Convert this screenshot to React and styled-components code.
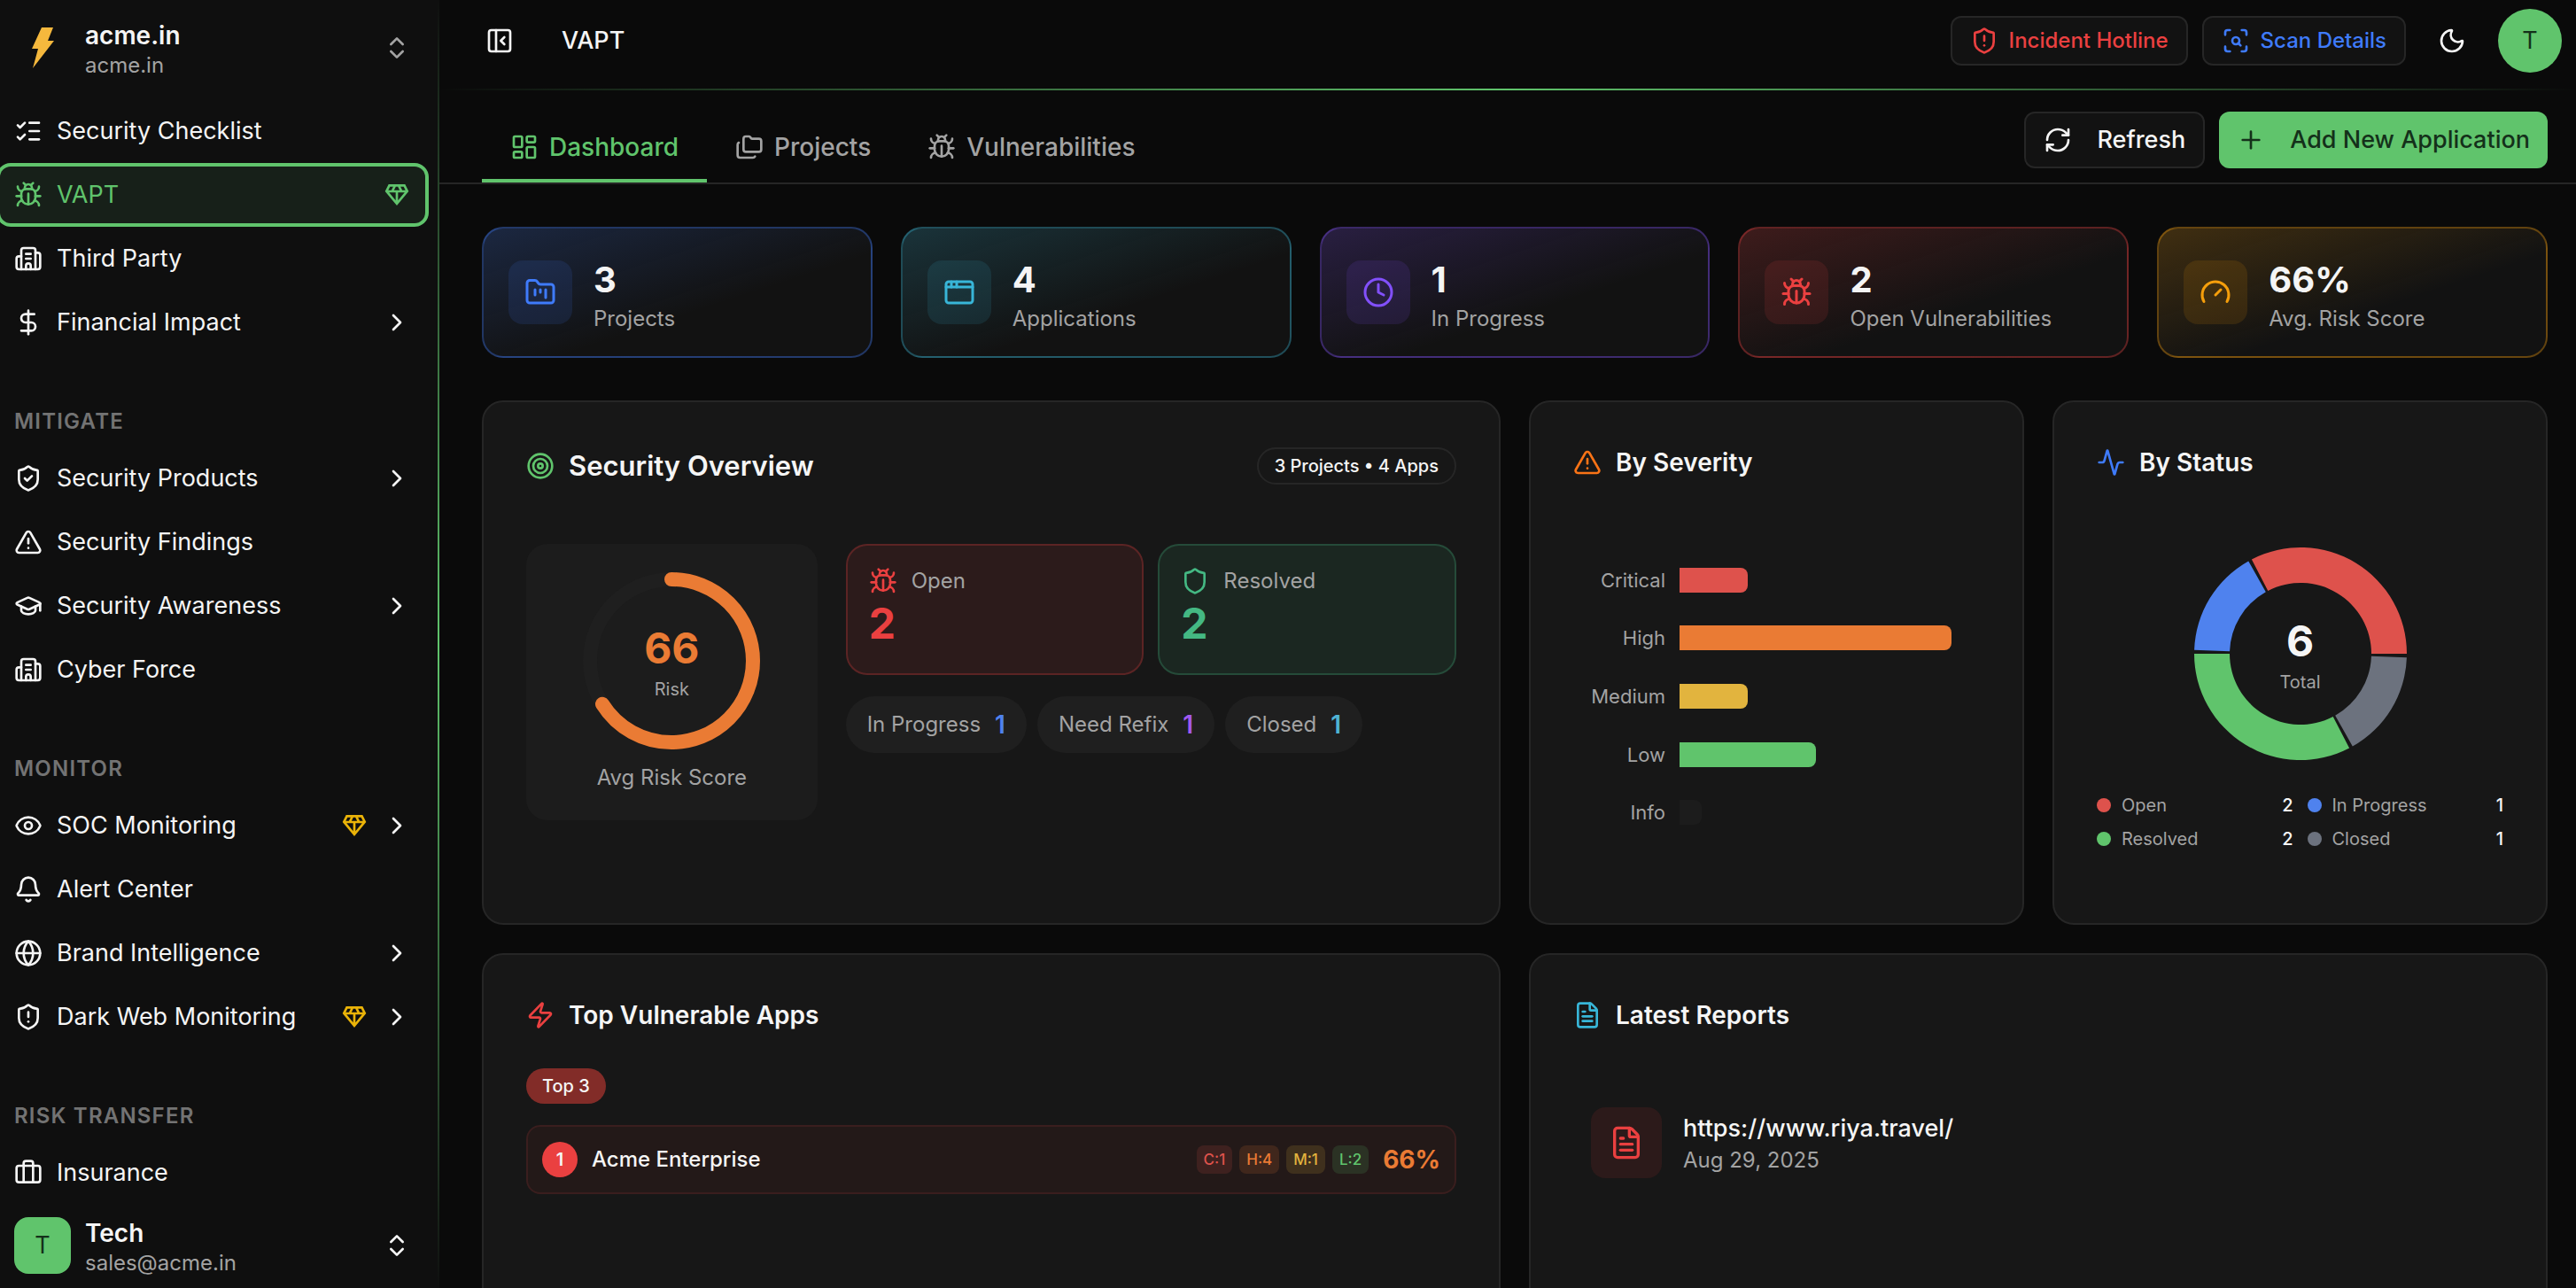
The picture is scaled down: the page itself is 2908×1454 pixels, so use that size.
import React from "react";
//Styled Components
import styled, { createGlobalStyle } from "styled-components";
//Icons
import {
  Activity,
  AppWindow,
  Bell,
  Briefcase,
  Bug,
  Building2,
  ChevronRight,
  ChevronsUpDown,
  Clock,
  DollarSign,
  Eye,
  FileText,
  FolderKanban,
  Folders,
  Gauge,
  Globe,
  GraduationCap,
  LayoutDashboard,
  ListChecks,
  Moon,
  PanelLeftClose,
  Plus,
  RefreshCw,
  ScanSearch,
  Shield,
  ShieldAlert,
  ShieldCheck,
  Target,
  TriangleAlert,
  Zap,
} from "lucide-react";
import { MdOutlineDiamond } from "react-icons/md";

const navGroups = [
  {
    items: [
      { name: "Security Checklist", icon: ListChecks },
      { name: "VAPT", icon: Bug, active: true, premium: true },
      { name: "Third Party", icon: Building2 },
      { name: "Financial Impact", icon: DollarSign, more: true },
    ],
  },
  {
    title: "MITIGATE",
    items: [
      { name: "Security Products", icon: ShieldCheck, more: true },
      { name: "Security Findings", icon: TriangleAlert },
      { name: "Security Awareness", icon: GraduationCap, more: true },
      { name: "Cyber Force", icon: Building2 },
    ],
  },
  {
    title: "MONITOR",
    items: [
      { name: "SOC Monitoring", icon: Eye, premium: true, more: true },
      { name: "Alert Center", icon: Bell },
      { name: "Brand Intelligence", icon: Globe, more: true },
      { name: "Dark Web Monitoring", icon: ShieldAlert, premium: true, more: true },
    ],
  },
  {
    title: "RISK TRANSFER",
    items: [{ name: "Insurance", icon: Briefcase }],
  },
];

const stats = [
  { value: "3", label: "Projects", icon: FolderKanban, color: "#3f7bfb", rgb: "63, 123, 251" },
  { value: "4", label: "Applications", icon: AppWindow, color: "#38b6d8", rgb: "56, 182, 216" },
  { value: "1", label: "In Progress", icon: Clock, color: "#8250fb", rgb: "130, 80, 251" },
  { value: "2", label: "Open Vulnerabilities", icon: Bug, color: "#ea4040", rgb: "234, 64, 64" },
  { value: "66%", label: "Avg. Risk Score", icon: Gauge, color: "#f59e0b", rgb: "245, 158, 11" },
];

const severities = [
  { name: "Critical", count: 1, color: "#de524c" },
  { name: "High", count: 4, color: "#ea7b34" },
  { name: "Medium", count: 1, color: "#e2b43e" },
  { name: "Low", count: 2, color: "#60c46c" },
  { name: "Info", count: 0, color: "#1c1c1c" },
];

const statuses = [
  { name: "Open", count: 2, color: "#de524c" },
  { name: "In Progress", count: 1, color: "#4f82ee" },
  { name: "Resolved", count: 2, color: "#60c46c" },
  { name: "Closed", count: 1, color: "#6c727e" },
];

const pills = [
  { name: "In Progress", count: 1, color: "#4f82ee" },
  { name: "Need Refix", count: 1, color: "#a259f0" },
  { name: "Closed", count: 1, color: "#4fb3d4" },
];

const counts = [
  { text: "C:1", color: "#de524c", rgb: "222, 82, 76" },
  { text: "H:4", color: "#ea7b34", rgb: "234, 123, 52" },
  { text: "M:1", color: "#e2b43e", rgb: "226, 180, 62" },
  { text: "L:2", color: "#60c46c", rgb: "96, 196, 108" },
];

const point = (radius, angle) => {
  const rad = (angle * Math.PI) / 180;
  return `${120 + radius * Math.cos(rad)} ${120 - radius * Math.sin(rad)}`;
};

//Slices run counter clockwise from 3 o'clock with a 2 degree gap
const getSlices = () => {
  const total = statuses.reduce((sum, s) => sum + s.count, 0);
  const unit = (360 - statuses.length * 2) / total;
  let start = 0;
  //Closed sits between Resolved and the starting point
  return statuses.map((s) => {
    const end = start + s.count * unit;
    const d = `M${point(120, start)} A120 120 0 0 0 ${point(120, end)} L${point(80, end)} A80 80 0 0 1 ${point(80, start)} Z`;
    start = end + 2;
    return { name: s.name, color: s.color, d };
  });
};

function Sidebar() {
  return (
    <Side>
      <Org type="button">
        <OrgLogo>
          <svg width="28" height="48" viewBox="0 0 28 48" aria-hidden="true">
            <path d="M13 1h13l-6 15h7L3 47l6-22H2z" fill="#f5b83d" />
          </svg>
        </OrgLogo>
        <Account>
          <strong>acme.in</strong>
          <span>acme.in</span>
        </Account>
        <ChevronsUpDown size={32} color="#a3a3a3" />
      </Org>
      <Nav>
        {navGroups.map((group) => (
          <NavGroup key={group.title || "main"}>
            {group.title && <NavTitle>{group.title}</NavTitle>}
            {group.items.map((item) => (
              <NavItem href="#" key={item.name} $active={item.active}>
                <item.icon size={32} />
                <span>{item.name}</span>
                {item.premium && (
                  <MdOutlineDiamond size={32} color={item.active ? "#60c46c" : "#eab308"} />
                )}
                {item.more && <ChevronRight size={32} />}
              </NavItem>
            ))}
          </NavGroup>
        ))}
      </Nav>
      <User type="button">
        <UserTile>T</UserTile>
        <Account>
          <strong>Tech</strong>
          <span>sales@acme.in</span>
        </Account>
        <ChevronsUpDown size={32} />
      </User>
    </Side>
  );
}

function TopBar() {
  return (
    <Header>
      <IconButton type="button" aria-label="Collapse sidebar">
        <PanelLeftClose size={32} />
      </IconButton>
      <PageName>VAPT</PageName>
      <HeaderButton type="button" $color="#ea4040">
        <ShieldAlert size={32} />
        Incident Hotline
      </HeaderButton>
      <HeaderButton type="button" $color="#3f7bfb">
        <ScanSearch size={32} />
        Scan Details
      </HeaderButton>
      <IconButton type="button" aria-label="Toggle theme">
        <Moon size={32} />
      </IconButton>
      <Avatar type="button">T</Avatar>
    </Header>
  );
}

function StatCard({ stat }) {
  return (
    <Stat $rgb={stat.rgb}>
      <StatIcon $color={stat.color} $rgb={stat.rgb}>
        <stat.icon size={36} />
      </StatIcon>
      <StatText>
        <StatValue>{stat.value}</StatValue>
        <StatLabel>{stat.label}</StatLabel>
      </StatText>
    </Stat>
  );
}

function Overview() {
  const length = 2 * Math.PI * 92;
  return (
    <Card $span={2}>
      <CardHead $large>
        <Target size={32} color="#60c46c" />
        <h2>Security Overview</h2>
        <Outline>3 Projects • 4 Apps</Outline>
      </CardHead>
      <OverviewGrid>
        <RiskBox>
          <Chart $size={200}>
            <svg width="200" height="200" viewBox="0 0 200 200" fill="none" aria-hidden="true">
              <circle cx="100" cy="100" r="92" stroke="#1f1f1f" strokeWidth="16" />
              <circle
                cx="100"
                cy="100"
                r="92"
                stroke="#ea7b34"
                strokeWidth="16"
                strokeLinecap="round"
                strokeDasharray={`${length * 0.66} ${length}`}
                transform="rotate(-90 100 100)"
              />
            </svg>
            <ChartCenter $color="#ea7b34">
              <strong>66</strong>
              <span>Risk</span>
            </ChartCenter>
          </Chart>
          <p>Avg Risk Score</p>
        </RiskBox>
        <OverviewSide>
          <Tiles>
            <Tile $color="#ea4040" $rgb="234, 64, 64">
              <div>
                <Bug size={32} />
                <span>Open</span>
              </div>
              <strong>2</strong>
            </Tile>
            <Tile $color="#44b883" $rgb="68, 184, 131">
              <div>
                <Shield size={32} />
                <span>Resolved</span>
              </div>
              <strong>2</strong>
            </Tile>
          </Tiles>
          <Pills>
            {pills.map((pill) => (
              <Pill key={pill.name} $color={pill.color}>
                {pill.name}
                <strong>{pill.count}</strong>
              </Pill>
            ))}
          </Pills>
        </OverviewSide>
      </OverviewGrid>
    </Card>
  );
}

function Severity() {
  return (
    <Card>
      <CardHead>
        <TriangleAlert size={32} color="#f97316" />
        <h2>By Severity</h2>
      </CardHead>
      <Bars>
        {severities.map((s) => (
          <BarRow key={s.name}>
            <span>{s.name}</span>
            <div>
              <Bar $color={s.color} style={{ width: `${Math.max(s.count * 25, 8)}%` }} />
            </div>
          </BarRow>
        ))}
      </Bars>
    </Card>
  );
}

function Status() {
  return (
    <Card>
      <CardHead>
        <Activity size={32} color="#3f7bfb" />
        <h2>By Status</h2>
      </CardHead>
      <Donut>
        <Chart $size={240}>
          <svg width="240" height="240" viewBox="0 0 240 240" aria-hidden="true">
            {getSlices().map((slice) => (
              <path key={slice.name} d={slice.d} fill={slice.color} />
            ))}
          </svg>
          <ChartCenter $color="#f5f5f5">
            <strong>6</strong>
            <span>Total</span>
          </ChartCenter>
        </Chart>
      </Donut>
      <Legend>
        {statuses.map((s) => (
          <LegendItem key={s.name} $color={s.color}>
            <span>{s.name}</span>
            <strong>{s.count}</strong>
          </LegendItem>
        ))}
      </Legend>
    </Card>
  );
}

function TopApps() {
  return (
    <Card $span={2} $tall>
      <CardHead>
        <Zap size={32} color="#ea4040" />
        <h2>Top Vulnerable Apps</h2>
      </CardHead>
      <TopBadge>Top 3</TopBadge>
      <AppRow>
        <Rank>1</Rank>
        <p>Acme Enterprise</p>
        {counts.map((count) => (
          <Count key={count.text} $color={count.color} $rgb={count.rgb}>
            {count.text}
          </Count>
        ))}
        <Score>66%</Score>
      </AppRow>
    </Card>
  );
}

function Reports() {
  return (
    <Card $span={2} $tall>
      <CardHead>
        <FileText size={32} color="#38b6d8" />
        <h2>Latest Reports</h2>
      </CardHead>
      <Report>
        <ReportIcon>
          <FileText size={40} />
        </ReportIcon>
        <div>
          <a href="#">https://www.riya.travel/</a>
          <p>Aug 29, 2025</p>
        </div>
      </Report>
    </Card>
  );
}

function App() {
  return (
    <>
      <GlobalStyle />
      <Page>
        <Sidebar />
        <Main>
          <TopBar />
          <Toolbar>
            <Tabs>
              <Tab href="#" $active>
                <LayoutDashboard size={32} />
                Dashboard
              </Tab>
              <Tab href="#">
                <Folders size={32} />
                Projects
              </Tab>
              <Tab href="#">
                <Bug size={32} />
                Vulnerabilities
              </Tab>
            </Tabs>
            <Actions>
              <Action type="button">
                <RefreshCw size={32} />
                Refresh
              </Action>
              <Action type="button" $primary>
                <Plus size={32} />
                Add New Application
              </Action>
            </Actions>
          </Toolbar>
          <Content>
            <Stats>
              {stats.map((stat) => (
                <StatCard stat={stat} key={stat.label} />
              ))}
            </Stats>
            <Cards>
              <Overview />
              <Severity />
              <Status />
              <TopApps />
              <Reports />
            </Cards>
          </Content>
        </Main>
      </Page>
    </>
  );
}

const GlobalStyle = createGlobalStyle`
  * {
    margin: 0;
    padding: 0;
    box-sizing: border-box;
  }
  body {
    background: #0a0a0a;
    color: #f5f5f5;
    font-family: "Inter", "Liberation Sans", sans-serif;
    font-size: 27px;
    line-height: 40px;
    -webkit-font-smoothing: antialiased;
  }
  button {
    font: inherit;
    color: inherit;
    background: none;
    border: none;
    cursor: pointer;
  }
  a {
    color: inherit;
    text-decoration: none;
  }
  svg {
    flex-shrink: 0;
    display: block;
  }
`;
const Page = styled.div`
  display: flex;
  height: 100vh;
  overflow: hidden;
`;
const Side = styled.aside`
  width: 496px;
  flex-shrink: 0;
  display: flex;
  flex-direction: column;
  background: #0f0f0f;
  border-right: 2px solid;
  border-image: linear-gradient(to bottom, transparent, #60c46c, transparent) 1;
`;
const Org = styled.button`
  display: flex;
  align-items: center;
  gap: 16px;
  height: 108px;
  padding: 0 30px 0 16px;
  flex-shrink: 0;
`;
const OrgLogo = styled.span`
  width: 64px;
  display: flex;
  justify-content: center;
`;
const Account = styled.span`
  flex: 1;
  display: flex;
  flex-direction: column;
  padding-top: 4px;
  text-align: left;
  strong {
    font-size: 28px;
    font-weight: 600;
    line-height: 36px;
  }
  span {
    font-size: 24px;
    line-height: 32px;
    color: #a3a3a3;
  }
`;
const Nav = styled.nav`
  flex: 1;
  min-height: 0;
  overflow: hidden;
  display: flex;
  flex-direction: column;
  gap: 48px;
  padding: 8px 14px 0 0;
`;
const NavGroup = styled.div`
  display: flex;
  flex-direction: column;
  gap: 8px;
`;
const NavTitle = styled.h3`
  padding: 0 16px;
  margin-bottom: -8px;
  font-size: 24px;
  font-weight: 600;
  line-height: 64px;
  letter-spacing: 0.05em;
  color: #737373;
`;
const NavItem = styled.a`
  display: flex;
  align-items: center;
  gap: 16px;
  height: 64px;
  padding: 0 16px;
  border-radius: 12px;
  color: ${({ $active }) => ($active ? "#60c46c" : "#f5f5f5")};
  background: ${({ $active }) => ($active ? "#172019" : "none")};
  box-shadow: ${({ $active }) => ($active ? "0 0 0 4px #60c46c" : "none")};
  span {
    flex: 1;
  }
`;
const User = styled.button`
  display: flex;
  align-items: center;
  gap: 16px;
  height: 96px;
  padding: 0 30px 0 16px;
  flex-shrink: 0;
`;
const UserTile = styled.span`
  width: 64px;
  height: 64px;
  border-radius: 16px;
  background: #60c46c;
  color: #14301a;
  line-height: 64px;
`;
const Main = styled.main`
  flex: 1;
  min-width: 0;
  display: flex;
  flex-direction: column;
`;
const Header = styled.header`
  display: flex;
  align-items: center;
  gap: 16px;
  padding: 10px 16px 18px 32px;
  flex-shrink: 0;
  border-bottom: 2px solid;
  border-image: linear-gradient(to right, transparent, #60c46c, transparent) 1;
`;
const IconButton = styled.button`
  width: 72px;
  height: 72px;
  display: flex;
  align-items: center;
  justify-content: center;
`;
const PageName = styled.h1`
  flex: 1;
  padding-left: 18px;
  font-size: 27px;
  font-weight: 500;
`;
const HeaderButton = styled.button`
  display: flex;
  align-items: center;
  gap: 12px;
  height: 56px;
  padding: 0 20px;
  border: 2px solid #262626;
  border-radius: 12px;
  background: #121212;
  color: ${({ $color }) => $color};
  font-size: 24px;
  font-weight: 500;
`;
const Avatar = styled.button`
  width: 72px;
  height: 72px;
  border-radius: 50%;
  background: #60c46c;
  color: #14301a;
`;
const Toolbar = styled.div`
  display: flex;
  justify-content: space-between;
  padding: 24px 32px 0 48px;
  flex-shrink: 0;
  border-bottom: 2px solid #262626;
`;
const Tabs = styled.nav`
  display: flex;
  padding-top: 4px;
`;
const Tab = styled.a`
  display: flex;
  align-items: center;
  gap: 12px;
  height: 76px;
  padding: 0 32px;
  font-size: 28px;
  font-weight: 500;
  color: ${({ $active }) => ($active ? "#60c46c" : "#a3a3a3")};
  border-bottom: 4px solid ${({ $active }) => ($active ? "#60c46c" : "transparent")};
`;
const Actions = styled.div`
  display: flex;
  gap: 16px;
`;
const Action = styled.button`
  display: flex;
  align-items: center;
  gap: 28px;
  height: 64px;
  padding: 0 20px;
  border: ${({ $primary }) => ($primary ? "none" : "2px solid #262626")};
  border-radius: 12px;
  background: ${({ $primary }) => ($primary ? "#60c46c" : "#121212")};
  color: ${({ $primary }) => ($primary ? "#14301a" : "#f5f5f5")};
  font-weight: 500;
`;
const Content = styled.div`
  flex: 1;
  min-height: 0;
  overflow-y: auto;
  scrollbar-width: none;
  padding: 48px 32px 48px 48px;
`;
const Stats = styled.section`
  display: grid;
  grid-template-columns: repeat(5, 1fr);
  gap: 32px;
  margin-bottom: 48px;
`;
const Stat = styled.div`
  display: flex;
  align-items: center;
  gap: 24px;
  padding: 26px 28px;
  border: 2px solid rgba(${({ $rgb }) => $rgb}, 0.35);
  border-radius: 24px;
  background: linear-gradient(to bottom right, rgba(${({ $rgb }) => $rgb}, 0.2), transparent 60%) #121212;
`;
const StatIcon = styled.div`
  width: 72px;
  height: 72px;
  display: flex;
  align-items: center;
  justify-content: center;
  border-radius: 16px;
  color: ${({ $color }) => $color};
  background: rgba(${({ $rgb }) => $rgb}, 0.12);
`;
const StatText = styled.div`
  padding-top: 4px;
`;
const StatValue = styled.p`
  font-size: 40px;
  font-weight: 700;
  line-height: 56px;
`;
const StatLabel = styled.p`
  font-size: 24px;
  line-height: 32px;
  color: #a3a3a3;
`;
const Cards = styled.section`
  display: grid;
  grid-template-columns: repeat(4, 1fr);
  gap: 32px;
`;
const Card = styled.article`
  grid-column: span ${({ $span }) => $span || 1};
  min-height: ${({ $tall }) => ($tall ? "560px" : "auto")};
  padding: 48px;
  border: 2px solid #262626;
  border-radius: 24px;
  background: #171717;
`;
const CardHead = styled.div`
  display: flex;
  align-items: center;
  gap: 16px;
  h2 {
    flex: 1;
    font-size: ${({ $large }) => ($large ? "31px" : "28px")};
    line-height: ${({ $large }) => ($large ? "48px" : "40px")};
    font-weight: 600;
  }
`;
const Outline = styled.span`
  padding: 4px 18px;
  border: 2px solid #262626;
  border-radius: 24px;
  font-size: 20px;
  font-weight: 500;
  line-height: 30px;
`;
const OverviewGrid = styled.div`
  display: grid;
  grid-template-columns: repeat(3, 1fr);
  gap: 32px;
  margin-top: 64px;
`;
const RiskBox = styled.div`
  display: flex;
  flex-direction: column;
  align-items: center;
  gap: 16px;
  padding: 32px;
  border-radius: 24px;
  background: #1c1c1c;
  p {
    font-size: 24px;
    line-height: 32px;
    color: #a3a3a3;
  }
`;
const Chart = styled.div`
  position: relative;
  width: ${({ $size }) => $size}px;
  height: ${({ $size }) => $size}px;
`;
const ChartCenter = styled.div`
  position: absolute;
  inset: 0;
  display: flex;
  flex-direction: column;
  align-items: center;
  justify-content: center;
  padding-top: 4px;
  strong {
    font-size: 48px;
    font-weight: 700;
    line-height: 60px;
    color: ${({ $color }) => $color};
  }
  span {
    font-size: 20px;
    line-height: 32px;
    color: #a3a3a3;
  }
`;
const OverviewSide = styled.div`
  grid-column: span 2;
  display: flex;
  flex-direction: column;
  gap: 24px;
`;
const Tiles = styled.div`
  display: grid;
  grid-template-columns: repeat(2, 1fr);
  gap: 16px;
`;
const Tile = styled.div`
  padding: 24px;
  border: 2px solid rgba(${({ $rgb }) => $rgb}, 0.25);
  border-radius: 24px;
  background: rgba(${({ $rgb }) => $rgb}, 0.1);
  color: ${({ $color }) => $color};
  div {
    display: flex;
    align-items: center;
    gap: 16px;
  }
  span {
    font-size: 24px;
    line-height: 32px;
    color: #a3a3a3;
  }
  strong {
    display: block;
    font-size: 48px;
    font-weight: 700;
    line-height: 64px;
  }
`;
const Pills = styled.div`
  display: flex;
  gap: 12px;
`;
const Pill = styled.span`
  display: flex;
  align-items: center;
  gap: 16px;
  height: 64px;
  padding: 0 24px;
  border-radius: 32px;
  background: #1f1f1f;
  color: #a3a3a3;
  font-size: 24px;
  strong {
    font-size: 28px;
    font-weight: 600;
    color: ${({ $color }) => $color};
  }
`;
const Bars = styled.div`
  display: flex;
  flex-direction: column;
  height: 388px;
  margin-top: 64px;
  padding: 16px 32px 44px 0;
`;
const BarRow = styled.div`
  flex: 1;
  display: flex;
  align-items: center;
  gap: 16px;
  span {
    width: 104px;
    text-align: right;
    font-size: 22px;
    line-height: 28px;
    color: #a3a3a3;
  }
  div {
    flex: 1;
  }
`;
const Bar = styled.i`
  display: block;
  height: 28px;
  border-radius: 0 8px 8px 0;
  background: ${({ $color }) => $color};
`;
const Donut = styled.div`
  display: flex;
  justify-content: center;
  margin-top: 64px;
  padding: 12px 0;
`;
const Legend = styled.div`
  display: grid;
  grid-template-columns: repeat(2, 1fr);
  gap: 8px 16px;
  margin-top: 24px;
`;
const LegendItem = styled.div`
  display: flex;
  align-items: center;
  gap: 12px;
  font-size: 20px;
  line-height: 30px;
  &::before {
    content: "";
    width: 16px;
    height: 16px;
    border-radius: 50%;
    background: ${({ $color }) => $color};
  }
  span {
    flex: 1;
    color: #a3a3a3;
  }
  strong {
    font-weight: 500;
  }
`;
const TopBadge = styled.span`
  display: inline-block;
  margin-top: 40px;
  padding: 4px 18px;
  border-radius: 20px;
  background: #822c28;
  font-size: 20px;
  font-weight: 500;
  line-height: 32px;
  vertical-align: top;
`;
const AppRow = styled.div`
  display: flex;
  align-items: center;
  gap: 8px;
  height: 78px;
  margin-top: 24px;
  padding: 0 16px;
  border: 2px solid #3a1e1e;
  border-radius: 16px;
  background: #231918;
  p {
    flex: 1;
    padding-left: 8px;
    font-size: 24px;
    font-weight: 500;
  }
`;
const Rank = styled.span`
  width: 40px;
  height: 40px;
  border-radius: 50%;
  background: #ea4040;
  font-size: 20px;
  font-weight: 600;
  text-align: center;
`;
const Count = styled.span`
  padding: 0 8px;
  border-radius: 8px;
  background: rgba(${({ $rgb }) => $rgb}, 0.15);
  color: ${({ $color }) => $color};
  font-size: 17px;
  font-weight: 500;
  line-height: 32px;
`;
const Score = styled.strong`
  padding-left: 8px;
  font-size: 28px;
  font-weight: 700;
  color: #ea7b34;
`;
const Report = styled.div`
  display: flex;
  align-items: center;
  gap: 24px;
  margin-top: 64px;
  padding: 20px;
  a {
    display: block;
    font-weight: 500;
  }
  p {
    font-size: 24px;
    line-height: 32px;
    color: #a3a3a3;
  }
`;
const ReportIcon = styled.div`
  width: 80px;
  height: 80px;
  display: flex;
  align-items: center;
  justify-content: center;
  border-radius: 16px;
  background: #2c1a1a;
  color: #ea4040;
`;
export default App;
